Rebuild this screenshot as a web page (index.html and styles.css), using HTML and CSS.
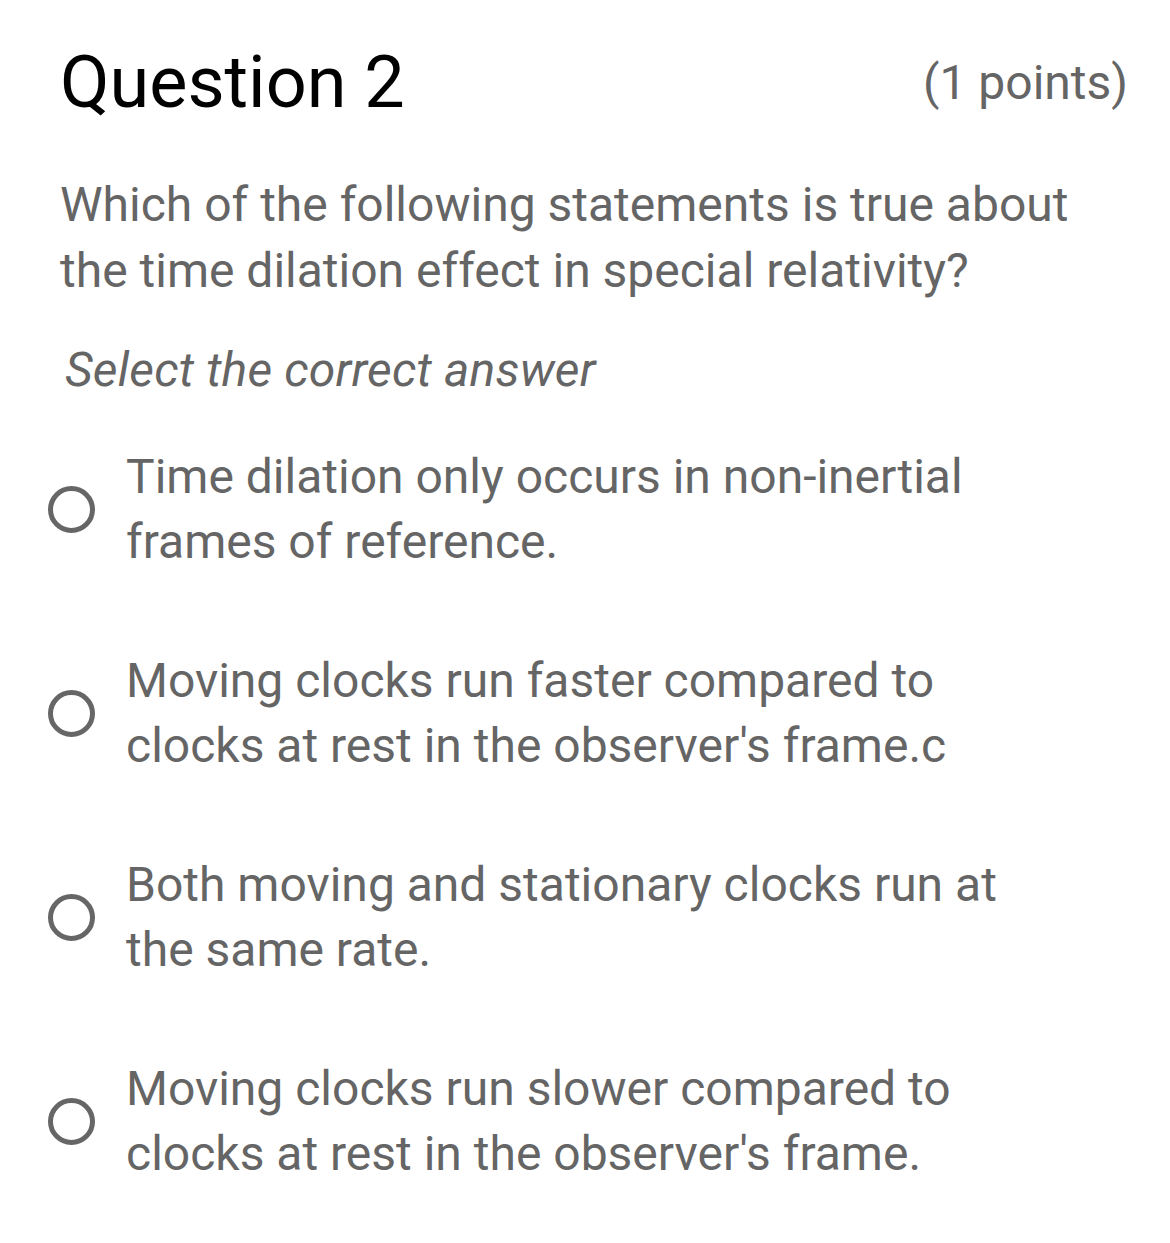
FILE: index.html
```html
<!DOCTYPE html>
<html lang="en">
<head>
    <meta charset="UTF-8">
    <meta name="viewport" content="width=device-width, initial-scale=1.0">
    <title>Question 2</title>
    <link rel="stylesheet" href="styles.css">
</head>
<body>
    <div id="page">
        <div class="header">
            <h1>Question 2</h1>
            <span class="points">(1 points)</span>
        </div>

        <p class="question">Which of the following statements is true about the time dilation effect in special relativity?</p>

        <p class="hint">Select the correct answer</p>

        <!-- Answer options -->
        <div id="options">
            <label class="option">
                <span class="radio"></span>
                <span class="text">Time dilation only occurs in non-inertial frames of reference.</span>
            </label>
            <label class="option">
                <span class="radio"></span>
                <span class="text">Moving clocks run faster compared to clocks at rest in the observer's frame.c</span>
            </label>
            <label class="option">
                <span class="radio"></span>
                <span class="text">Both moving and stationary clocks run at the same rate.</span>
            </label>
            <label class="option">
                <span class="radio"></span>
                <span class="text">Moving clocks run slower compared to clocks at rest in the observer's frame.</span>
            </label>
        </div>
    </div>
</body>
</html>
```

FILE: styles.css
```css
* {
    margin: 0;
    padding: 0;
    box-sizing: border-box;
    font-family: Roboto, "Liberation Sans", Arial, sans-serif;
}

body {
    background-color: #fff;
    color: #656565;
}

#page {
    padding: 41px 42px 0 48px;
}

.header {
    display: flex;
    justify-content: space-between;
    align-items: center;
    padding-left: 12px;
}

h1 {
    font-size: 72px;
    line-height: 84px;
    font-weight: 400;
    color: #000;
}

.points {
    font-size: 48px;
    line-height: 60px;
}

.question {
    font-size: 48px;
    line-height: 66px;
    margin-top: 47px;
    padding-left: 12px;
}

.hint {
    font-size: 48px;
    line-height: 66px;
    font-style: italic;
    letter-spacing: 0.2px;
    margin-top: 33px;
    padding-left: 17px;
}

#options {
    margin-top: 41px;
    display: flex;
    flex-direction: column;
    gap: 74px;
}

.option {
    display: flex;
    align-items: center;
    gap: 31px;
    cursor: pointer;
}

.radio {
    flex: none;
    width: 47px;
    height: 47px;
    border: 5px solid #666;
    border-radius: 50%;
}

.text {
    font-size: 48px;
    line-height: 65px;
    max-width: 920px;
}
```
